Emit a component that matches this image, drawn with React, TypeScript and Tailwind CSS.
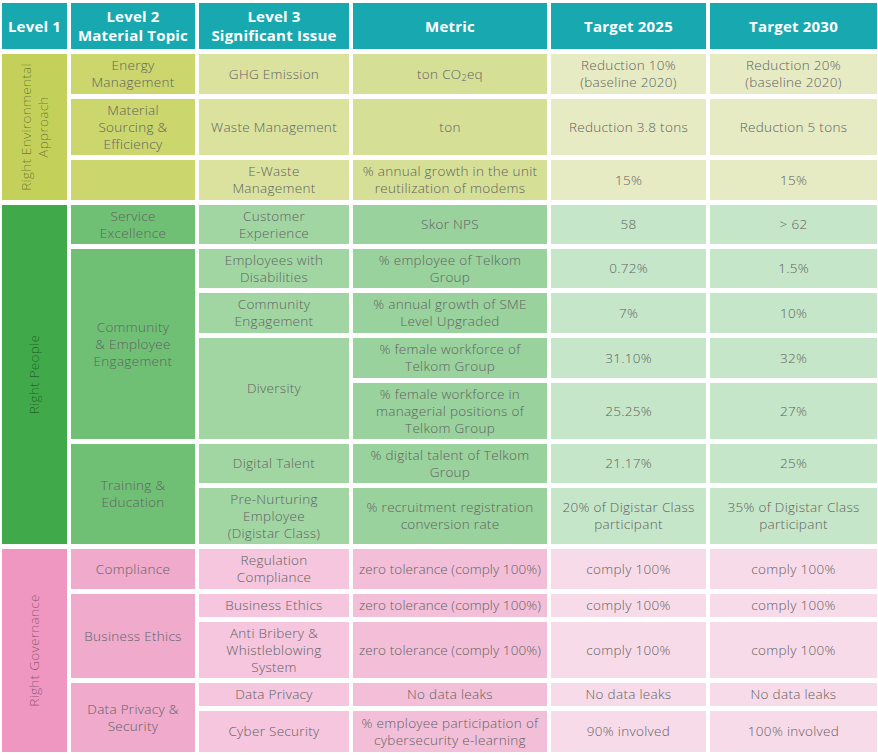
import React from "react";

type CellProps = {
  className?: string;
  children?: React.ReactNode;
};

function Cell({ className = "", children }: CellProps) {
  return (
    <div
      className={`flex items-center justify-center px-1 text-center text-[13.5px] leading-[17px] font-light tracking-[0.3px] text-[#626262] ${className}`}
    >
      <div>{children}</div>
    </div>
  );
}

function Head({ children }: { children: React.ReactNode }) {
  return (
    <div className="flex items-center justify-center bg-[#17a8b0] text-center text-[15px] leading-[19px] font-bold tracking-[0.2px] text-white">
      <div>{children}</div>
    </div>
  );
}

function Side({ className = "", children }: CellProps) {
  return (
    <div className={`relative ${className}`}>
      <div className="absolute inset-0 flex items-center justify-center">
        <div className="-rotate-90 whitespace-nowrap text-center text-[13.5px] leading-[17px] font-light tracking-[0.3px] text-black/45">
          {children}
        </div>
      </div>
    </div>
  );
}

// colours per pillar
const env = { l2: "bg-[#cbd66c]", l3: "bg-[#dae29e]", m: "bg-[#d6df96]", t: "bg-[#e6ebc3]" };
const ppl = { l2: "bg-[#6fc075]", l3: "bg-[#a1d6a3]", m: "bg-[#99d29d]", t: "bg-[#c6e6c9]" };
const gov = { l2: "bg-[#f0aacc]", l3: "bg-[#f5c6dd]", m: "bg-[#f3bfd8]", t: "bg-[#f8dbe9]" };

function Targets({ t, a, b }: { t: string; a: React.ReactNode; b: React.ReactNode }) {
  return (
    <>
      <Cell className={t}>{a}</Cell>
      <Cell className={t}>{b}</Cell>
    </>
  );
}

const zero = <span className="whitespace-nowrap tracking-[0.1px]">zero tolerance (comply 100%)</span>;

export default function App() {
  return (
    <div
      className="h-[755px] w-[878px] overflow-hidden bg-white pl-[2px] pt-[3px]"
      style={{ fontFamily: '"Open Sans", "Noto Sans", sans-serif' }}
    >
      <div className="grid grid-cols-[65px_124px_150px_194px_155px_167px] grid-rows-[46px_40px_56px_40px_39px_39px_40px_40px_56px_39px_56px_40px_23px_56px_23px_41px] gap-x-1 gap-y-[5px]">
        {/* header */}
        <Head>Level 1</Head>
        <Head>
          Level 2
          <br />
          Material Topic
        </Head>
        <Head>
          Level 3
          <br />
          Significant Issue
        </Head>
        <Head>Metric</Head>
        <Head>Target 2025</Head>
        <Head>Target 2030</Head>

        {/* Right Environmental Approach */}
        <Side className="row-span-3 bg-[#c3d15a]">
          Right Environmental
          <br />
          Approach
        </Side>
        <Cell className={env.l2}>
          Energy
          <br />
          Management
        </Cell>
        <Cell className={env.l3}>GHG Emission</Cell>
        <Cell className={env.m}>
          ton CO<sub className="text-[9px]">2</sub>eq
        </Cell>
        <Targets
          t={env.t}
          a={
            <>
              Reduction 10%
              <br />
              (baseline 2020)
            </>
          }
          b={
            <>
              Reduction 20%
              <br />
              (baseline 2020)
            </>
          }
        />

        <Cell className={env.l2}>
          Material
          <br />
          Sourcing &amp;
          <br />
          Efficiency
        </Cell>
        <Cell className={env.l3}>Waste Management</Cell>
        <Cell className={env.m}>ton</Cell>
        <Targets t={env.t} a="Reduction 3.8 tons" b="Reduction 5 tons" />

        <Cell className={env.l2} />
        <Cell className={env.l3}>
          E-Waste
          <br />
          Management
        </Cell>
        <Cell className={env.m}>
          % annual growth in the unit
          <br />
          reutilization of modems
        </Cell>
        <Targets t={env.t} a="15%" b="15%" />

        {/* Right People */}
        <Side className="row-span-7 bg-[#40a94a]">Right People</Side>
        <Cell className={ppl.l2}>
          Service
          <br />
          Excellence
        </Cell>
        <Cell className={ppl.l3}>
          Customer
          <br />
          Experience
        </Cell>
        <Cell className={ppl.m}>Skor NPS</Cell>
        <Targets t={ppl.t} a="58" b="> 62" />

        <Cell className={`row-span-4 ${ppl.l2}`}>
          Community
          <br />
          &amp; Employee
          <br />
          Engagement
        </Cell>
        <Cell className={ppl.l3}>
          Employees with
          <br />
          Disabilities
        </Cell>
        <Cell className={ppl.m}>
          % employee of Telkom
          <br />
          Group
        </Cell>
        <Targets t={ppl.t} a="0.72%" b="1.5%" />

        <Cell className={ppl.l3}>
          Community
          <br />
          Engagement
        </Cell>
        <Cell className={ppl.m}>
          % annual growth of SME
          <br />
          Level Upgraded
        </Cell>
        <Targets t={ppl.t} a="7%" b="10%" />

        <Cell className={`row-span-2 ${ppl.l3}`}>Diversity</Cell>
        <Cell className={ppl.m}>
          % female workforce of
          <br />
          Telkom Group
        </Cell>
        <Targets t={ppl.t} a="31.10%" b="32%" />

        <Cell className={ppl.m}>
          % female workforce in
          <br />
          managerial positions of
          <br />
          Telkom Group
        </Cell>
        <Targets t={ppl.t} a="25.25%" b="27%" />

        <Cell className={`row-span-2 ${ppl.l2}`}>
          Training &amp;
          <br />
          Education
        </Cell>
        <Cell className={ppl.l3}>Digital Talent</Cell>
        <Cell className={ppl.m}>
          % digital talent of Telkom
          <br />
          Group
        </Cell>
        <Targets t={ppl.t} a="21.17%" b="25%" />

        <Cell className={ppl.l3}>
          Pre-Nurturing
          <br />
          Employee
          <br />
          (Digistar Class)
        </Cell>
        <Cell className={ppl.m}>
          % recruitment registration
          <br />
          conversion rate
        </Cell>
        <Targets
          t={ppl.t}
          a={
            <>
              20% of Digistar Class
              <br />
              participant
            </>
          }
          b={
            <>
              35% of Digistar Class
              <br />
              participant
            </>
          }
        />

        {/* Right Governance */}
        <Side className="row-span-5 bg-[#ef97c0]">Right Governance</Side>
        <Cell className={gov.l2}>Compliance</Cell>
        <Cell className={gov.l3}>
          Regulation
          <br />
          Compliance
        </Cell>
        <Cell className={gov.m}>{zero}</Cell>
        <Targets t={gov.t} a="comply 100%" b="comply 100%" />

        <Cell className={`row-span-2 ${gov.l2}`}>Business Ethics</Cell>
        <Cell className={gov.l3}>Business Ethics</Cell>
        <Cell className={gov.m}>{zero}</Cell>
        <Targets t={gov.t} a="comply 100%" b="comply 100%" />

        <Cell className={gov.l3}>
          Anti Bribery &amp;
          <br />
          Whistleblowing
          <br />
          System
        </Cell>
        <Cell className={gov.m}>{zero}</Cell>
        <Targets t={gov.t} a="comply 100%" b="comply 100%" />

        <Cell className={`row-span-2 ${gov.l2}`}>
          Data Privacy &amp;
          <br />
          Security
        </Cell>
        <Cell className={gov.l3}>Data Privacy</Cell>
        <Cell className={gov.m}>No data leaks</Cell>
        <Targets t={gov.t} a="No data leaks" b="No data leaks" />

        <Cell className={gov.l3}>Cyber Security</Cell>
        <Cell className={gov.m}>
          % employee participation of
          <br />
          cybersecurity e-learning
        </Cell>
        <Targets t={gov.t} a="90% involved" b="100% involved" />
      </div>
    </div>
  );
}
